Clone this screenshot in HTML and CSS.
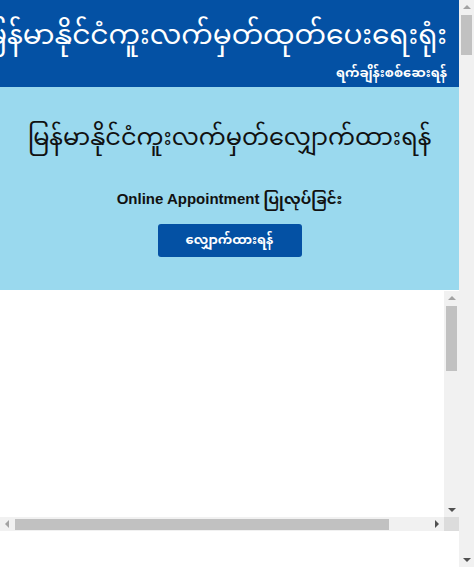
FILE: index.html
```html
<!DOCTYPE html>
<html lang="my">
<head>
<meta charset="utf-8">
<title>Passport Office</title>
<link rel="stylesheet" href="styles.css">
</head>
<body>
<div class="page">
  <div class="main">
    <header class="header">
      <div class="title-row"><h1 class="title">မြန်မာနိုင်ငံကူးလက်မှတ်ထုတ်ပေးရေးရုံး</h1></div>
      <div class="sub-row"><a class="sub">ရက်ချိန်းစစ်ဆေးရန်</a></div>
    </header>
    <section class="hero">
      <h2 class="hero-title">မြန်မာနိုင်ငံကူးလက်မှတ်လျှောက်ထားရန်</h2>
      <p class="hero-text">Online Appointment ပြုလုပ်ခြင်း</p>
      <a class="btn">လျှောက်ထားရန်</a>
    </section>
    <div class="frame">
      <div class="frame-body"></div>
      <div class="sb-v">
        <span class="arr arr-up"></span>
        <span class="thumb-v"></span>
        <span class="sb-fill"></span>
        <span class="arr arr-down"></span>
      </div>
      <div class="sb-h">
        <span class="arr arr-left"></span>
        <span class="thumb-h"></span>
        <span class="sb-fill"></span>
        <span class="arr arr-right"></span>
      </div>
      <div class="corner"></div>
    </div>
  </div>
  <div class="sb-page">
    <span class="arr arr-up"></span>
    <span class="thumb-page"></span>
    <span class="sb-fill"></span>
    <span class="arr arr-down"></span>
  </div>
</div>
</body>
</html>
```
FILE: styles.css
```css
html, body {
  margin: 0;
  padding: 0;
  background: #ffffff;
}
body {
  font-family: "Noto Sans Myanmar", "Myanmar Text", "Padauk", "Liberation Sans", Arial, sans-serif;
}
.page {
  display: flex;
  width: 474px;
  height: 567px;
  overflow: hidden;
}
.main {
  flex: 1;
  min-width: 0;
  display: flex;
  flex-direction: column;
}
.header {
  background: #0451a4;
  height: 87px;
  box-sizing: border-box;
  padding: 12px 12px 0 0;
  color: #ffffff;
  overflow: hidden;
}
.title-row {
  display: flex;
  justify-content: flex-end;
  overflow: hidden;
}
.title {
  margin: 0;
  font-size: 28px;
  font-weight: normal;
  white-space: nowrap;
  line-height: 52px;
  flex-shrink: 0;
}
.sub-row {
  display: flex;
  justify-content: flex-end;
}
.sub {
  font-size: 13px;
  font-weight: bold;
  line-height: 20px;
  white-space: nowrap;
}
.hero {
  background: #9ad9ee;
  height: 203px;
  box-sizing: border-box;
  padding-top: 28px;
  display: flex;
  flex-direction: column;
  align-items: center;
  color: #111111;
}
.hero-title {
  margin: 0;
  font-size: 24px;
  font-weight: normal;
  line-height: 50px;
  white-space: nowrap;
}
.hero-text {
  margin: 22px 0 0;
  font-size: 15px;
  font-weight: bold;
  line-height: 24px;
  font-family: "Liberation Sans", "Noto Sans Myanmar", "Myanmar Text", Arial, sans-serif;
}
.btn {
  margin-top: 13px;
  width: 144px;
  height: 33px;
  background: #0451a4;
  color: #ffffff;
  border-radius: 3px;
  display: flex;
  align-items: center;
  justify-content: center;
  font-size: 13px;
  font-weight: bold;
}
.frame {
  margin-top: 1px;
  display: grid;
  grid-template-columns: 1fr 15px;
  grid-template-rows: 226px 14px;
}
.frame-body {
  background: #ffffff;
}
.sb-v, .sb-page {
  background: #f1f1f1;
  display: flex;
  flex-direction: column;
  align-items: center;
}
.sb-page {
  width: 15px;
  height: 567px;
}
.sb-h {
  background: #f1f1f1;
  display: flex;
  align-items: center;
}
.corner {
  background: #dcdcdc;
}
.sb-fill {
  flex: 1;
}
.arr {
  width: 0;
  height: 0;
  border-style: solid;
  border-color: transparent;
}
.arr-up {
  margin: 5px 0 4px;
  border-width: 0 4px 4px 4px;
  border-bottom-color: #a3a3a3;
}
.arr-down {
  margin: 4px 0 5px;
  border-width: 4px 4px 0 4px;
  border-top-color: #505050;
}
.arr-left {
  margin: 0 4px 0 5px;
  border-width: 4px 4px 4px 0;
  border-right-color: #a3a3a3;
}
.arr-right {
  margin: 0 5px 0 4px;
  border-width: 4px 0 4px 4px;
  border-left-color: #505050;
}
.thumb-v {
  width: 11px;
  height: 65px;
  background: #c1c1c1;
  margin-top: 2px;
}
.thumb-page {
  width: 11px;
  height: 40px;
  background: #c1c1c1;
  margin-top: 2px;
}
.thumb-h {
  width: 374px;
  height: 11px;
  background: #c1c1c1;
  margin-left: 2px;
}
```
